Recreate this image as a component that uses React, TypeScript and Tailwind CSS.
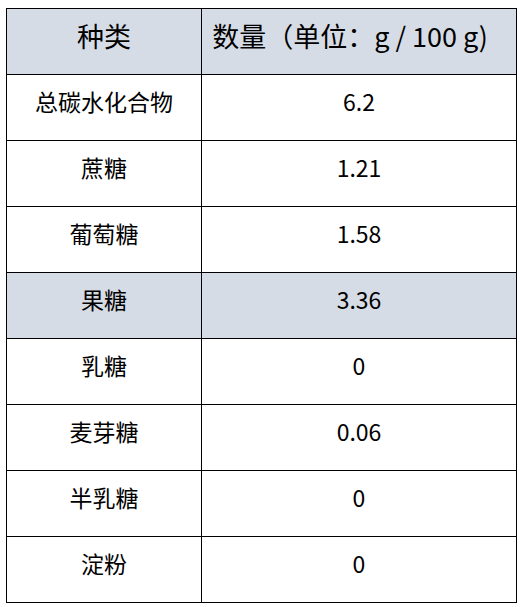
const rows: { name: string; value: string; shaded?: boolean }[] = [
	{ name: "总碳水化合物", value: "6.2" },
	{ name: "蔗糖", value: "1.21" },
	{ name: "葡萄糖", value: "1.58" },
	{ name: "果糖", value: "3.36", shaded: true },
	{ name: "乳糖", value: "0" },
	{ name: "麦芽糖", value: "0.06" },
	{ name: "半乳糖", value: "0" },
	{ name: "淀粉", value: "0" },
]

const App = () => {
	return (
		<div className="w-[520px] h-[607px] bg-white pt-[8px] pl-[6px] font-['Noto_Sans_CJK_SC',sans-serif] text-black">
			<table className="w-[511px] border-collapse">
				<thead>
					<tr className="h-[66px] bg-[#d6dce5]">
						<th className="w-[195px] border border-black pb-[10px] text-[27px] font-normal">种类</th>
						<th className="border border-black pb-[10px] pr-[18px] text-[27px] font-normal">数量（单位：g / 100 g)</th>
					</tr>
				</thead>
				<tbody>
					{rows.map((r) => (
						<tr key={r.name} className={`h-[66px] ${r.shaded ? "bg-[#d6dce5]" : ""}`}>
							<td className="border border-black pb-[12px] text-center text-[23px]">{r.name}</td>
							<td className="border border-black pb-[12px] text-center text-[23px]">{r.value}</td>
						</tr>
					))}
				</tbody>
			</table>
		</div>
	)
}

export default App
